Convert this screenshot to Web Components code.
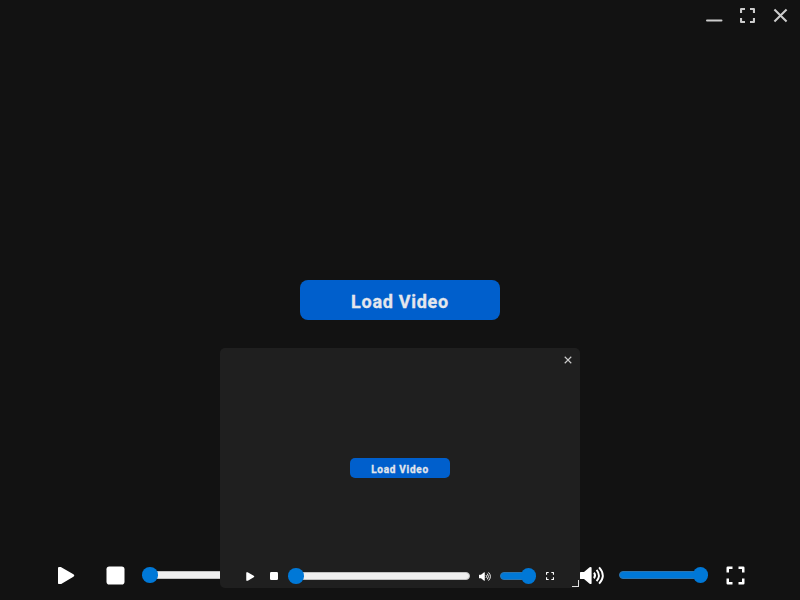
<!DOCTYPE html>
<html lang="en"><head><meta charset="utf-8"><title>Video Player</title>
<style>html,body{margin:0;height:100%;background:#121212;overflow:hidden}</style></head>
<body><player-app></player-app>
<script>
const define=(name,html,setup)=>customElements.define(name,class extends HTMLElement{
  constructor(){super();this.attachShadow({mode:'open'}).innerHTML=html}
  connectedCallback(){if(setup)setup(this)}
});
const ICONS={
  play:['0 0 17 18','<path d="M0 1.2Q0 .4 1.2 .4H2.8L15 7.6Q17.6 9 15 10.5L3.2 17.6H1.2Q0 17.6 0 16.4Z" fill="currentColor"/>'],
  stop:['0 0 18 18','<rect width="18" height="18" rx="2.8" fill="currentColor"/>'],
  expand:['0 0 18 18','<path d="M6 1.25H1.25V6M12 1.25h4.75V6M6 16.75H1.25V12M12 16.75h4.75V12" fill="none" stroke="currentColor" stroke-width="2.5" stroke-linejoin="round"/>'],
  close:['0 0 12 12','<path d="M.4.4l11.2 11.2M11.6.4L.4 11.6" fill="none" stroke="currentColor" stroke-width="1.9"/>'],
  minimize:['0 0 16 12','<path d="M1 11.5h14.5" stroke="currentColor" stroke-width="2" stroke-linecap="round"/>'],
  volume:['0 0 24 18','<path d="M0 6Q0 5.5.7 5.5H4L9.6.8Q11 0 11.6 1V17Q11 18 9.6 17.2L4 12.5H.7Q0 12.5 0 12Z" fill="currentColor"/><path d="M14 6.2Q16.2 9 14 11.8M16.6 3.3Q21.2 9 16.6 14.7M19.1.8Q26.5 9 19.1 17.2" fill="none" stroke="currentColor" stroke-width="1.9"/>']
};
define('ui-icon','<style>:host{display:block;flex:none}svg{display:block;width:100%;height:100%;overflow:visible}</style><svg></svg>',el=>{
  const s=el.shadowRoot.querySelector('svg'),i=ICONS[el.getAttribute('name')];
  s.setAttribute('viewBox',i[0]);s.innerHTML=i[1];
});
define('range-bar',`<style>
:host{display:flex;align-items:center;height:16px}
.track{flex:1;height:8px;box-sizing:border-box;border:1px solid #c2c2c2;border-radius:4px;background:#efefef}
.thumb{flex:none;width:15.5px;height:15.5px;border-radius:50%;background:#0078d7}
.before{display:none}
:host([full]) .before{display:block;background:#0078d7;border-color:#2c75b0;margin-right:-8px}
:host([full]) .after{display:none}
.after{margin-left:-8px}.thumb{position:relative}
</style><div class="track before"></div><div class="thumb"></div><div class="track after"></div>`);
define('load-button',`<style>
:host{display:flex;align-items:center;justify-content:center;box-sizing:border-box;width:200px;height:40px;padding-top:3px;border-radius:8px;background:#005fcc;color:#e4e7ec;font:700 18px/1 Roboto,sans-serif;letter-spacing:.72px;-webkit-text-stroke:.3px #e4e7ec}
:host([small]){width:100px;height:20px;padding-top:3px;border-radius:5px;font-size:10px}
</style><slot></slot>`);
define('media-controls',`<style>
:host{display:flex;align-items:center;color:#fff}
ui-icon{transform:translate(0,.5px)}
.play{width:17px;height:18px;margin-right:31px}.stop{width:18px;height:18px;margin-right:18px;transform:translate(.5px,.5px)}
.seek{width:423px;margin-right:15px}.vol{width:24px;height:18px;margin-right:15px}
.level{width:89px;margin-right:18px}.full{width:18px;height:18px;transform:translate(.5px,.5px)}
:host([small]) ui-icon{transform:none}
:host([small]) .play{width:9px;height:9px;margin-right:15px}
:host([small]) .stop{width:8px;height:8px;margin-right:10px}
:host([small]) .seek{width:182px;margin-right:9px}
:host([small]) .vol{width:12px;height:9px;margin-right:9px}
:host([small]) .level{width:36px;margin-right:10px}
:host([small]) .full{width:8px;height:8px}
</style><ui-icon class="play" name="play"></ui-icon><ui-icon class="stop" name="stop"></ui-icon><range-bar class="seek"></range-bar><ui-icon class="vol" name="volume"></ui-icon><range-bar class="level" full></range-bar><ui-icon class="full" name="expand"></ui-icon>`);
define('mini-player',`<style>
:host{display:grid;grid-template-rows:24px 1fr 24px;box-sizing:border-box;width:360px;height:240px;border-radius:5px;background:#1f1f1f}
header{display:flex;justify-content:flex-end;padding:8px 9px 0 0;color:#ccc}
header ui-icon{width:7px;height:7px;transform:translate(.5px,.5px)}
main{display:grid;place-items:center}
media-controls{padding-left:26px}
.grip{position:absolute;right:1px;bottom:1px;width:6px;height:6px;border:solid #e0e0e0;border-width:0 1px 1px 0}
</style><header><ui-icon name="close"></ui-icon></header><main><load-button small>Load Video</load-button></main><media-controls small></media-controls><div class="grip"></div>`);
define('player-app',`<style>
:host{display:grid;grid-template-rows:50px 1fr 50px;width:800px;height:600px;background:#121212}
header{display:flex;justify-content:flex-end;align-items:flex-start;padding:9px 13px 0 0;color:#ccc}
header ui-icon{width:13px;height:13px}
header .min{width:16px;height:12px;margin-right:18px}header .max{width:15px;height:15px;margin:-1px 19px 0 0}
main{display:grid;place-items:center}
media-controls{padding-left:58px}
mini-player{position:absolute;left:220px;top:348px}
</style><header><ui-icon class="min" name="minimize"></ui-icon><ui-icon class="max" name="expand"></ui-icon><ui-icon name="close"></ui-icon></header><main><load-button>Load Video</load-button></main><media-controls></media-controls><mini-player></mini-player>`);
</script></body></html>
